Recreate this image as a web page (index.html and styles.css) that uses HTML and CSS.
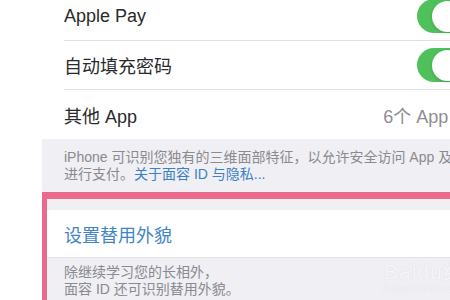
FILE: index.html
```html
<!DOCTYPE html>
<html lang="zh-CN">
<head>
<meta charset="utf-8">
<link rel="stylesheet" href="styles.css">
</head>
<body>
<div class="page">
  <div class="gutter"></div>
  <div class="main">
    <div class="list">
      <div class="row">
        <span class="label">Apple Pay</span>
        <span class="toggle"><span class="thumb"></span></span>
      </div>
      <div class="row">
        <span class="label">自动填充密码</span>
        <span class="toggle"><span class="thumb"></span></span>
      </div>
      <div class="row last">
        <span class="label">其他 App</span>
        <span class="value">6个 App<span class="chev">›</span></span>
      </div>
    </div>
    <div class="footnote">
      iPhone 可识别您独有的三维面部特征，以允许安全访问 App 及<br>
      进行支付。<span class="link">关于面容 ID 与隐私...</span>
    </div>
    <div class="highlight">
      <div class="spacer"></div>
      <div class="row action">
        <span class="action-label">设置替用外貌</span>
      </div>
      <div class="footnote inner">
        除继续学习您的长相外，<br>
        面容 ID 还可识别替用外貌。
      </div>
    </div>
  </div>
</div>
<div class="watermark">
  <span class="wm-logo">Baidu经验</span>
  <span class="wm-url">jingyan.baidu.com</span>
</div>
</body>
</html>
```

FILE: styles.css
```css
html, body {
  margin: 0;
  padding: 0;
  width: 450px;
  height: 300px;
  overflow: hidden;
  background: #ffffff;
  font-family: "Liberation Sans", "Noto Sans CJK SC", sans-serif;
  position: relative;
}

.page {
  display: flex;
  align-items: stretch;
  width: 492px;
  height: 300px;
}

.gutter {
  width: 42px;
  flex: 0 0 42px;
  background: #ffffff;
}

.main {
  flex: 0 0 450px;
  width: 450px;
  background: #efeff4;
  display: flex;
  flex-direction: column;
}

.list {
  background: #ffffff;
  margin-top: -8px;
}

.row {
  display: flex;
  align-items: center;
  height: 48px;
  margin-left: 22px;
  border-bottom: 1px solid #e1e1e5;
}

.row.last {
  border-bottom: none;
  height: 49px;
}

.label {
  font-size: 18px;
  color: #2a2a2c;
}

.toggle {
  margin-left: auto;
  margin-right: 19px;
  width: 56px;
  height: 34px;
  border-radius: 17px;
  background: #4fc15a;
  position: relative;
  display: flex;
  align-items: center;
}

.thumb {
  width: 31px;
  height: 31px;
  border-radius: 50%;
  background: #ffffff;
  margin-left: 15px;
  box-shadow: 0 1px 3px rgba(0, 0, 0, 0.2);
}

.value {
  margin-left: auto;
  margin-right: 27px;
  font-size: 18px;
  color: #8d8d92;
  display: flex;
  align-items: center;
  gap: 8px;
}

.chev {
  font-size: 26px;
  color: #c4c4c8;
  line-height: 1;
}

.footnote {
  padding: 10px 0 9px 22px;
  font-size: 14px;
  line-height: 17px;
  color: #8a8a8f;
  white-space: nowrap;
}

.link {
  color: #3d80c4;
}

.highlight {
  border-top: 7px solid #ea6a8e;
  border-left: 5px solid #ea6a8e;
  flex: 1;
  display: flex;
  flex-direction: column;
}

.spacer {
  height: 11px;
}

.row.action {
  background: #ffffff;
  margin-left: 0;
  padding-left: 17px;
  height: 47px;
  border-bottom: 1px solid #e1e1e5;
}

.action-label {
  font-size: 18px;
  color: #3f85c5;
}

.footnote.inner {
  padding: 6px 0 0 17px;
}

.watermark {
  position: absolute;
  left: 384px;
  top: 260px;
  display: flex;
  flex-direction: column;
  color: rgba(255, 255, 255, 0.75);
  text-shadow: 0 0 1px rgba(190, 190, 200, 0.5);
  pointer-events: none;
  white-space: nowrap;
}

.wm-logo {
  font-size: 21px;
  line-height: 23px;
  letter-spacing: 1px;
}

.wm-url {
  font-size: 10px;
  line-height: 12px;
}
```
